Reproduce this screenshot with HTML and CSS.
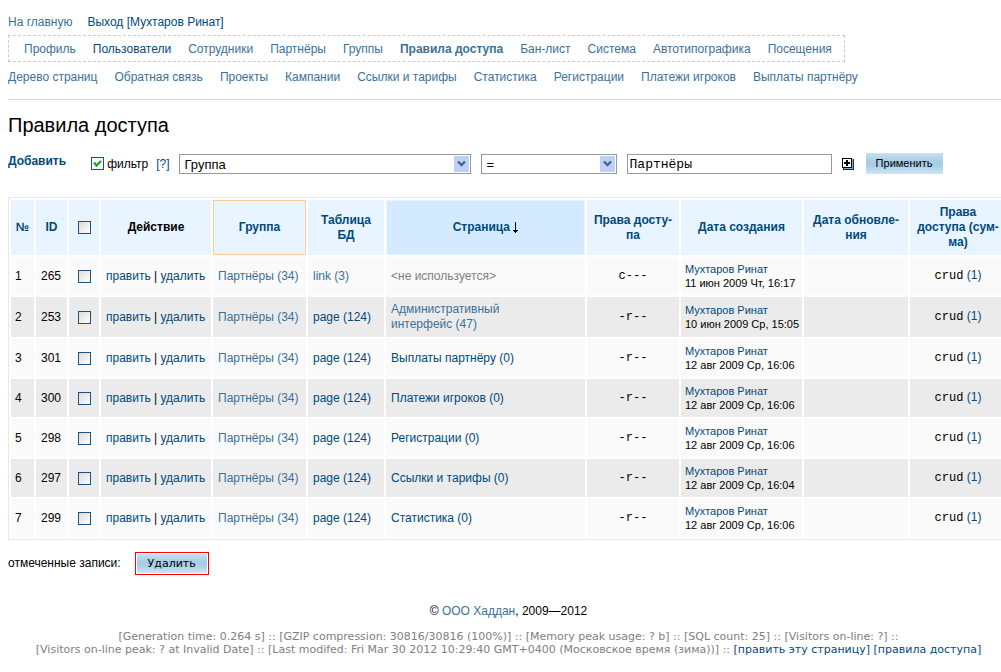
FILE: index.html
```html
<!DOCTYPE html>
<html lang="ru">
<head>
<meta charset="utf-8">
<title>Правила доступа</title>
<link rel="stylesheet" href="styles.css">
</head>
<body>
<header>
<nav class="menu menu-top"><a href="#">На главную</a><a href="#" class="strong">Выход [Мухтаров Ринат]</a></nav>
<nav class="menu menu-boxed"><a href="#">Профиль</a><a href="#" class="strong">Пользователи</a><a href="#">Сотрудники</a><a href="#">Партнёры</a><a href="#">Группы</a><a href="#" class="current">Правила доступа</a><a href="#">Бан-лист</a><a href="#">Система</a><a href="#">Автотипографика</a><a href="#">Посещения</a></nav>
<nav class="menu menu-sub"><a href="#">Дерево страниц</a><a href="#">Обратная связь</a><a href="#">Проекты</a><a href="#">Кампании</a><a href="#">Ссылки и тарифы</a><a href="#">Статистика</a><a href="#">Регистрации</a><a href="#">Платежи игроков</a><a href="#">Выплаты партнёру</a></nav>
</header>
<main>
<h1>Правила доступа</h1>
<form class="filter">
<a href="#" class="add">Добавить</a>
<label class="toggle"><input type="checkbox" class="check" checked><span>фильтр</span></label>
<a href="#" class="help">[?]</a>
<span class="picker picker-field"><select aria-label="Поле"><option>Группа</option></select><svg viewBox="0 0 15 16"><rect width="15" height="16" rx="1" fill="#bdd0fb"/><path d="M4 5.500l3.500 3.500L11 5.500" fill="none" stroke="#4d6185" stroke-width="2.400"/></svg></span>
<span class="picker picker-op"><select aria-label="Условие"><option>=</option></select><svg viewBox="0 0 15 16"><rect width="15" height="16" rx="1" fill="#bdd0fb"/><path d="M4 5.500l3.500 3.500L11 5.500" fill="none" stroke="#4d6185" stroke-width="2.400"/></svg></span>
<input type="text" class="value" aria-label="Значение" value="Партнёры">
<button type="button" class="plus" aria-label="Добавить условие"><svg width="12" height="12" viewBox="0 0 12 12" shape-rendering="crispEdges"><path d="M2 1h10v11H1v-2h1z" fill="#003366"/><path d="M0 0h10v10H0z" fill="#000"/><path d="M1 1h8v8H1z" fill="#fff"/><path d="M10 1h1v10H2v-1h8z" fill="#8fa6bd"/><path d="M4 2h2v6H4zM2 4h6v2H2z" fill="#000"/></svg></button>
<button type="button" class="btn apply">Применить</button>
</form>
<table>
<colgroup><col class="c-num"><col class="c-id"><col class="c-check"><col class="c-action"><col class="c-group"><col class="c-table"><col class="c-page"><col class="c-rights"><col class="c-created"><col class="c-updated"><col class="c-sum"></colgroup>
<thead><tr><th><a href="#">№</a></th><th><a href="#">ID</a></th><th><input type="checkbox" class="check" aria-label="Выбрать все"></th><th>Действие</th><th class="filtered"><a href="#">Группа</a></th><th><a href="#">Таблица БД</a></th><th class="sorted"><a href="#">Страница</a> <svg width="5" height="11" viewBox="0 0 5 11" shape-rendering="crispEdges"><path d="M2 0h1v11H2zM1 9h3v1H1zM0 8h5v1H0z"/></svg></th><th><a href="#">Права досту-<br>па</a></th><th><a href="#">Дата создания</a></th><th><a href="#">Дата обновле-<br>ния</a></th><th><a href="#">Права доступа (сум-<br>ма)</a></th></tr></thead>
<tbody>
<tr><td>1</td><td>265</td><td class="mid"><input type="checkbox" class="check" aria-label="265"></td><td><a href="#">править</a> | <a href="#">удалить</a></td><td><a href="#" class="seen">Партнёры (34)</a></td><td><a href="#" class="seen">link (3)</a></td><td class="none">&lt;не используется&gt;</td><td class="mid"><code>c---</code></td><td class="date"><a href="#">Мухтаров Ринат</a><br>11 июн 2009 Чт, 16:17</td><td></td><td class="mid"><code>crud</code> <a href="#">(1)</a></td></tr>
<tr class="tall"><td>2</td><td>253</td><td class="mid"><input type="checkbox" class="check" aria-label="253"></td><td><a href="#">править</a> | <a href="#">удалить</a></td><td><a href="#" class="seen">Партнёры (34)</a></td><td><a href="#">page (124)</a></td><td><a href="#" class="seen">Административный<br>интерфейс (47)</a></td><td class="mid"><code>-r--</code></td><td class="date"><a href="#">Мухтаров Ринат</a><br>10 июн 2009 Ср, 15:05</td><td></td><td class="mid"><code>crud</code> <a href="#">(1)</a></td></tr>
<tr><td>3</td><td>301</td><td class="mid"><input type="checkbox" class="check" aria-label="301"></td><td><a href="#">править</a> | <a href="#">удалить</a></td><td><a href="#" class="seen">Партнёры (34)</a></td><td><a href="#">page (124)</a></td><td><a href="#">Выплаты партнёру (0)</a></td><td class="mid"><code>-r--</code></td><td class="date"><a href="#">Мухтаров Ринат</a><br>12 авг 2009 Ср, 16:06</td><td></td><td class="mid"><code>crud</code> <a href="#">(1)</a></td></tr>
<tr><td>4</td><td>300</td><td class="mid"><input type="checkbox" class="check" aria-label="300"></td><td><a href="#">править</a> | <a href="#">удалить</a></td><td><a href="#" class="seen">Партнёры (34)</a></td><td><a href="#">page (124)</a></td><td><a href="#">Платежи игроков (0)</a></td><td class="mid"><code>-r--</code></td><td class="date"><a href="#">Мухтаров Ринат</a><br>12 авг 2009 Ср, 16:06</td><td></td><td class="mid"><code>crud</code> <a href="#">(1)</a></td></tr>
<tr><td>5</td><td>298</td><td class="mid"><input type="checkbox" class="check" aria-label="298"></td><td><a href="#">править</a> | <a href="#">удалить</a></td><td><a href="#" class="seen">Партнёры (34)</a></td><td><a href="#">page (124)</a></td><td><a href="#">Регистрации (0)</a></td><td class="mid"><code>-r--</code></td><td class="date"><a href="#">Мухтаров Ринат</a><br>12 авг 2009 Ср, 16:06</td><td></td><td class="mid"><code>crud</code> <a href="#">(1)</a></td></tr>
<tr><td>6</td><td>297</td><td class="mid"><input type="checkbox" class="check" aria-label="297"></td><td><a href="#">править</a> | <a href="#">удалить</a></td><td><a href="#" class="seen">Партнёры (34)</a></td><td><a href="#">page (124)</a></td><td><a href="#">Ссылки и тарифы (0)</a></td><td class="mid"><code>-r--</code></td><td class="date"><a href="#">Мухтаров Ринат</a><br>12 авг 2009 Ср, 16:04</td><td></td><td class="mid"><code>crud</code> <a href="#">(1)</a></td></tr>
<tr><td>7</td><td>299</td><td class="mid"><input type="checkbox" class="check" aria-label="299"></td><td><a href="#">править</a> | <a href="#">удалить</a></td><td><a href="#" class="seen">Партнёры (34)</a></td><td><a href="#">page (124)</a></td><td><a href="#">Статистика (0)</a></td><td class="mid"><code>-r--</code></td><td class="date"><a href="#">Мухтаров Ринат</a><br>12 авг 2009 Ср, 16:06</td><td></td><td class="mid"><code>crud</code> <a href="#">(1)</a></td></tr>
</tbody>
</table>
<div class="bulk"><span>отмеченные записи:</span><span class="danger"><button type="button" class="btn delete">Удалить</button></span></div>
</main>
<footer>
<p class="copyright">© <a href="#" class="seen">ООО Хаддан</a>, 2009—2012</p>
<p class="stats">[Generation time: 0.264 s] :: [GZIP compression: 30816/30816 (100%)] :: [Memory peak usage: ? b] :: [SQL count: 25] :: [Visitors on-line: ?] ::<br>[Visitors on-line peak: ? at Invalid Date] :: [Last modifed: Fri Mar 30 2012 10:29:40 GMT+0400 (Московское время (зима))] :: <a href="#">[править эту страницу]</a> <a href="#">[правила доступа]</a></p>
</footer>
</body>
</html>
```
FILE: styles.css
```css
* { box-sizing: border-box; }
html { overflow-x: hidden; background: #fff; }
body {
  margin: 15px -8px 0 8px;
  font: 12px/15px "Liberation Sans", Arial, sans-serif;
  color: #000;
}
a { color: #004a7b; text-decoration: none; }
a:hover { text-decoration: underline; }
.seen { color: #3b7199; }

header { border-bottom: 1px solid #d8d8d8; padding-bottom: 14px; margin-right: 8px; }
.menu { display: flex; gap: 17px; white-space: nowrap; }
.menu a { color: #3b7199; }
.menu a.strong { color: #004a7b; }
.menu a.current { font-weight: bold; }
.menu-top { gap: 15px; margin-bottom: 5px; }
.menu-boxed { width: max-content; height: 27px; align-items: center; padding: 1px 12px 0 15px; border: 1px dashed #ccc; margin-bottom: 8px; }

h1 { margin: 13px 0 13px; font-size: 20px; font-weight: normal; line-height: 24px; }

.filter { display: flex; align-items: center; height: 28px; margin-bottom: 19px; }
.add { font-weight: bold; margin-right: 25px; padding-bottom: 5px; }
.toggle { display: flex; align-items: center; gap: 3px; margin-right: 8px; }
.toggle .check { margin-bottom: 2px; }
.help { margin-right: 9px; }
.check {
  appearance: none; display: inline-block; vertical-align: middle;
  width: 13px; height: 13px; margin: 0; border: 1px solid #1c5180;
  background: linear-gradient(135deg, #dcdcd7, #fff);
}
.check:checked {
  background: url("data:image/svg+xml,%3Csvg xmlns='http://www.w3.org/2000/svg' viewBox='0 0 11 11'%3E%3Cpath d='M2 4.500l2.500 3L9 3' fill='none' stroke='%2321a121' stroke-width='2.200'/%3E%3C/svg%3E") #f8f8f6;
}
.picker { display: grid; align-items: center; margin-right: 10px; }
.picker select, .picker svg { grid-area: 1 / 1; }
.picker svg { width: 15px; height: 16px; justify-self: end; margin-right: 2px; pointer-events: none; }
.picker select, .value { height: 20px; border: 1px solid #999; border-radius: 0; background: #fff; color: #000; }
.picker select { appearance: none; width: 100%; padding: 1px 20px 0 5px; font: 13px "Liberation Sans", Arial, sans-serif; }
.picker-field { width: 292px; }
.picker-op { width: 136px; }
.value { width: 205px; padding: 1px 2px 0; margin-right: 10px; font: 13px "Liberation Mono", "Courier New", monospace; }
.plus { display: flex; padding: 0; border: 0; background: none; margin-right: 12px; }
.btn { border: 0; padding: 0; color: #000; background: linear-gradient(#c9e0f0, #a7cde7 40%, #a7cde7 60%, #d2e5f2); }
.apply { width: 77px; height: 21px; margin-bottom: 2px; font: 11px "Liberation Sans", Arial, sans-serif; }

table { width: 100%; table-layout: fixed; border-collapse: separate; border-spacing: 2px; border: 1px solid #e8e8e8; }
.c-num { width: 23px; }
.c-id { width: 31px; }
.c-check { width: 30px; }
.c-action { width: 110px; }
.c-group { width: 93px; }
.c-table { width: 76px; }
.c-rights { width: 92px; }
.c-created { width: 121px; }
.c-updated { width: 104px; }
.c-sum { width: 96px; }
th { height: 55px; padding: 0 5px; background: #e8f4ff; font-weight: bold; }
th.filtered { border: 1px solid #fc9; }
th.sorted { background: #d4ebff; border: 1px solid #e8f4ff; }
th svg { vertical-align: -2px; }
td { height: 38px; padding: 0 5px; background: #fafafa; white-space: nowrap; }
.tall td { height: 40px; }
tbody tr:nth-child(even) td { background: #ebebeb; }
.mid { text-align: center; }
.none { color: #808080; }
.date { padding: 0 4px; font-size: 11px; line-height: 14px; }
th, td:first-child { padding-left: 4px; padding-right: 4px; }
code { font: 12px/15px "Liberation Mono", "Courier New", monospace; }

.bulk { display: flex; align-items: center; gap: 14px; margin-top: 12px; }
.danger { display: flex; padding: 1px; border: 1px solid #f00; }
.delete { width: 70px; height: 19px; font: 11px "DejaVu Sans", Verdana, sans-serif; }

footer { text-align: center; }
.copyright { margin: 29px 0 11px; }
.stats { margin: 0; font: 11px/13px "DejaVu Sans", Verdana, sans-serif; color: #808080; white-space: nowrap; }
```
